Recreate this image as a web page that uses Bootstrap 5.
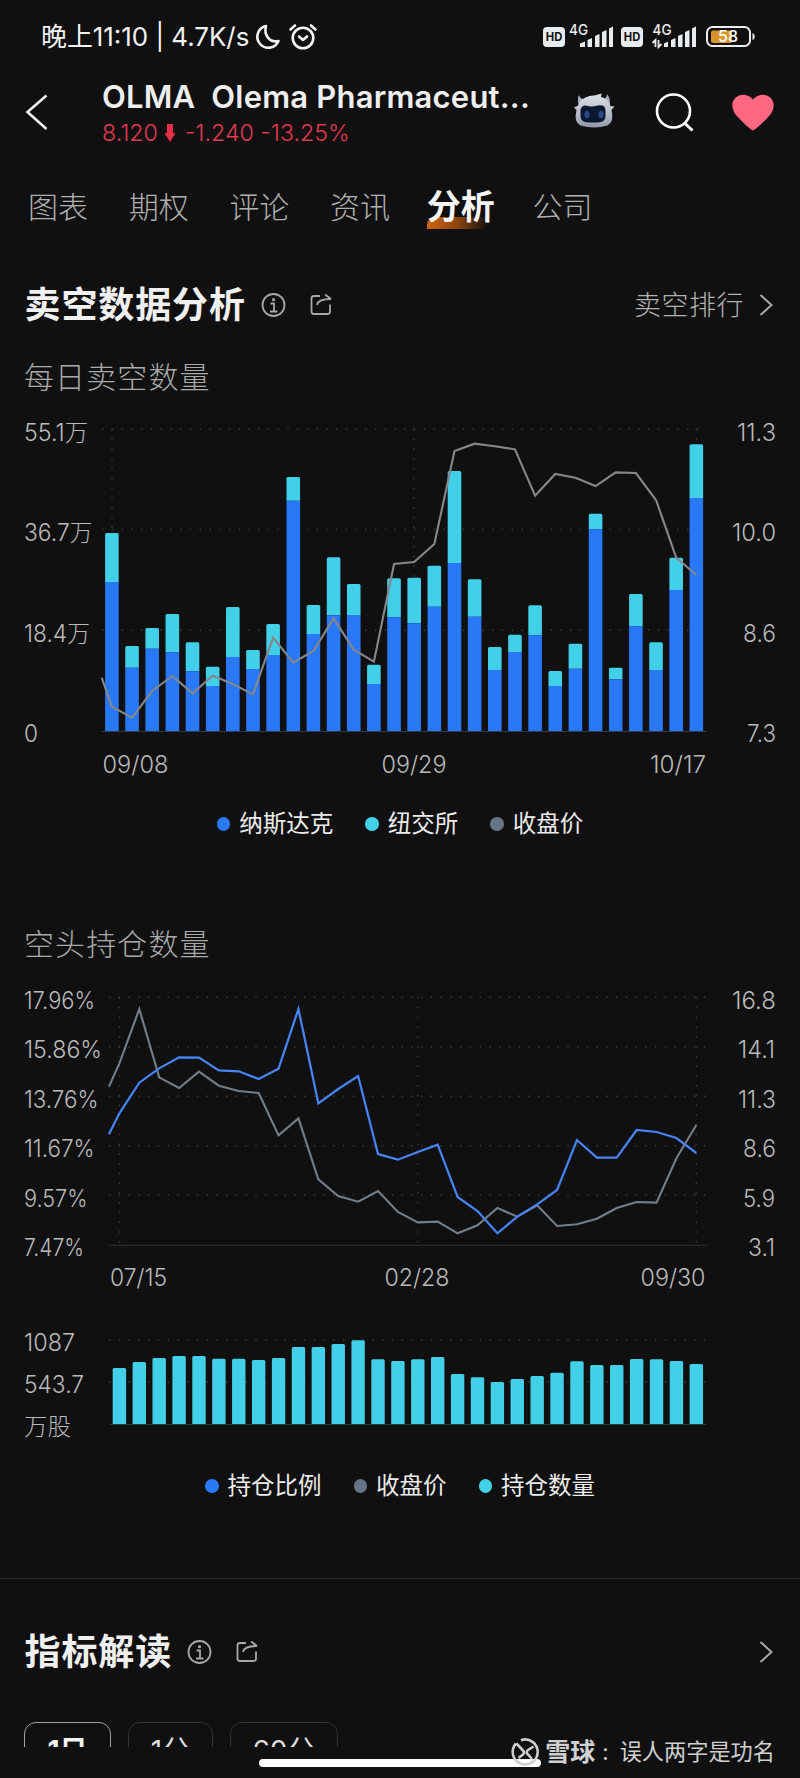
<!DOCTYPE html>
<html lang="zh-CN" data-bs-theme="dark">
<head>
<meta charset="utf-8">
<meta name="viewport" content="width=device-width, initial-scale=1">
<title>OLMA 分析</title>
<link href="https://cdn.jsdelivr.net/npm/bootstrap@5.3.0/dist/css/bootstrap.min.css" rel="stylesheet">
<style>
  body { background:#101010; color:#eee; font-family:Inter,"Noto Sans CJK SC",sans-serif; line-height:1; overflow:hidden; }
  .screen { width:800px; height:1778px; overflow:hidden; background:#101010; }
  .t { white-space:nowrap; display:inline-block; }
  .status-row { height:74px; padding-left:41px; color:#f2f2f2; }
  .status-text { font-size:25.9px; font-weight:400; line-height:34px; }
  .head-row { height:86px; }
  .stock-name { font-size:31px; font-weight:600; letter-spacing:.2px; color:#eee; line-height:36px; }
  .stock-price { font-size:23.2px; font-weight:300; color:#e03a50; line-height:36px; }
  .tabs-row { height:94px; margin-bottom:2px; padding-left:28px; gap:40.7px; font-size:30px; font-weight:300; color:#b0b0b0; }
  .tab-on { position:relative; font-size:34px; font-weight:700; color:#f5f5f5; margin-left:-4px; margin-right:-3px; }
  .tab-on::before { content:""; position:absolute; left:0; top:26.5px; width:62px; height:12px; border-radius:8px 0 8px 0; background:linear-gradient(90deg,#cf6410,#8a440f 50%,#101010); }
  .tab-on span { position:relative; }
  .title-row { height:98px; margin-bottom:2px; padding:0 27.5px 0 24.5px; }
  .title-text { font-size:36px; letter-spacing:.9px; font-weight:700; color:#f0f0f0; }
  .more-text { font-size:27px; letter-spacing:.5px; font-weight:300; color:#b2b2b2; }
  .sub-row { height:44px; padding-left:24px; font-size:30px; letter-spacing:1.1px; font-weight:300; color:#aaa; }
  .legend-row { height:68px; font-size:23.5px; color:#ececec; gap:32px; font-weight:400; }
  .key { gap:9px; }
  .dot { width:13.5px; height:13.5px; border-radius:50%; }
  .c-blue { background:#2878f8; } .c-cyan { background:#42d0e8; } .c-gray { background:#667488; }
  .spacer-a { height:64px; } .spacer-b { height:58px; }
  .rule { height:1px; background:#2b2d2b; }
  .indicator-row { height:141px; padding-top:5px; }
  .pills { height:25px; overflow:hidden; padding-left:24px; gap:17px; }
  .pill { height:54px; border:1.5px solid #333; border-radius:12px; font-size:28px; color:#ddd; flex:none; padding-top:14px; }
  .pill-on { border-color:#a0a0a0; font-weight:700; color:#f2f2f2; }
  .bottom { height:31px; position:relative; }
  .home { width:282px; height:8.5px; border-radius:5px; background:#fff; margin-left:258.5px; position:relative; top:11.5px; }
  .mark-line { position:absolute; right:25px; top:-13px; height:36px; gap:6px; color:#d0d0d0; font-size:22.2px; }
  .brand { font-size:25px; font-weight:600; }
  svg { display:block; flex:none; overflow:visible; }
  svg text { font-family:Inter,"Noto Sans CJK SC",sans-serif; }
  .axis { font-size:23.5px; font-weight:300; fill:#bababa; }
</style>
</head>
<body>
<div class="screen">
  <div class="status-row d-flex align-items-center">
    <span class="status-text t">晚上11:10 | 4.7K/s</span>
    <svg width="66" height="30" viewBox="252 22 66 30" fill="none" stroke="#f2f2f2" stroke-width="2.6" stroke-linecap="round" stroke-linejoin="round" class="ms-1">
      <path d="M265 26a11 11 0 1 0 12.5 15c-9 2-15-6-12.500-15z"/>
      <circle cx="302" cy="38" r="10.300"/><path d="M298 36.500l4 3.500 4-3.500M289.500 29.500l4.500-4M314.500 29.500l-4.500-4"/>
    </svg>
    <svg width="216" height="30" viewBox="540 22 216 30" class="ms-auto" style="margin-right:44px">
      <g fill="#e9ecee"><rect x="543" y="27" width="22" height="20" rx="4"/><rect x="621" y="27" width="22" height="20" rx="4"/>
      <path d="M580 47v-3.500l5-2V47zM587.500 47v-7l4.500-2v9zM595 47V36l4.500-2v13zM602 47V32l4.500-2v17zM609 47V28.500l4-2V47z"/>
      <path d="M664 47v-3.500l4-2V47zM671 47v-7l4.500-2v9zM678 47V36l4.500-2v13zM685 47V32l4.500-2v17zM692 47V28.500l4-2V47z"/></g>
      <path d="M655.500 47v-7l-3 3M658.500 40v7l3-3" fill="none" stroke="#e9ecee" stroke-width="1.800"/>
      <g font-size="12" font-weight="700" fill="#111"><text x="545.800" y="41.400" textLength="16.500" lengthAdjust="spacingAndGlyphs">HD</text><text x="623.800" y="41.400" textLength="16.500" lengthAdjust="spacingAndGlyphs">HD</text></g>
      <g font-size="15" font-weight="500" fill="#eee"><text x="569" y="35" textLength="19" lengthAdjust="spacingAndGlyphs">4G</text><text x="652.500" y="35" textLength="19" lengthAdjust="spacingAndGlyphs">4G</text></g>
      <rect x="707" y="27" width="43" height="19" rx="5.500" fill="none" stroke="#eee" stroke-width="2"/><rect x="711" y="30.500" width="21" height="12.500" rx="2" fill="#d9952b"/>
      <path d="M752.500 33v7c3-1 3-6 0-7" fill="#eee"/><text x="718" y="42" font-size="16" font-weight="500" fill="#fff" textLength="20">58</text>
    </svg>
  </div>

  <div class="head-row d-flex">
    <svg width="102" height="86" viewBox="0 74 102 86" fill="none" stroke="#eee" stroke-width="2.600"><path d="M46.500 95.500L27.500 112l19 17"/></svg>
    <div class="d-flex flex-column" style="padding-top:5px">
      <span class="stock-name t">OLMA&nbsp; Olema Pharmaceut...</span>
      <span class="stock-price t d-flex align-items-center"><span>8.120</span><svg width="12" height="18" viewBox="0 0 11 18" fill="#e6304a" style="margin:0 9px 0 6px"><path d="M2.500 0h6v9H11L5.500 18 0 9h2.500z"/></svg><span>-1.240 -13.25%</span></span>
    </div>
    <svg width="230" height="86" viewBox="570 74 230 86" class="ms-auto">
      <defs><linearGradient id="fur" x1="0" y1="0" x2="0" y2="1"><stop offset="0" stop-color="#dfe2ea"/><stop offset=".6" stop-color="#b5bac7"/><stop offset="1" stop-color="#8e98ae"/></linearGradient></defs>
      <path d="M578.500 104q-1.500-5 .5-9 1 3.500 5 4.500l-1 5zM605 98q2-1 2-4 4 5 2.500 11l-5 1z" fill="#a4aaba"/>
      <path d="M574 107.500l3.500-1.500q3-8 12-10 6-.5 12-2.500l-.5 3.500q8 2 9.500 9l4 .5-3 3.500q3 12-4 15.500-13 4-27 0-7-3-4-15.500z" fill="url(#fur)"/>
      <path d="M580.500 110q1-4.500 5-4.500 6 2 12 0 8-1.500 8 5v5q0 7-8 7h-9q-8 0-8-7z" fill="#0c1730"/>
      <g fill="#264a85"><ellipse cx="587" cy="114.500" rx="2.600" ry="3.800"/><ellipse cx="601" cy="114.500" rx="2.600" ry="3.800"/></g>
      <g fill="none" stroke="#fff" stroke-width="2.600"><circle cx="673.500" cy="111" r="16.500"/><path d="M684.500 123l8 7.500" stroke-width="3"/></g>
      <path d="M753 130.500Q749 129 735.500 114.500C725 99 743 88 753 99.500 763 88 781 99 770.500 114.500 757 129 753 130.500 753 130.500z" fill="#ff6880"/>
    </svg>
  </div>

  <div class="tabs-row d-flex align-items-center">
    <span>图表</span><span>期权</span><span>评论</span><span>资讯</span><span class="tab-on"><span>分析</span></span><span>公司</span>
  </div>

  <div class="title-row d-flex align-items-center">
    <span class="title-text t">卖空数据分析</span>
    <svg width="72" height="26" viewBox="261 292 72 26" fill="none" stroke="#a8a8a8" stroke-width="1.800" style="margin-left:15.500px">
      <g id="tools"><circle cx="273.500" cy="305" r="11"/><path d="M270.500 303.500h3.500v8M270 311.500h7.500"/><circle cx="273.500" cy="299.700" r=".7"/>
      <path d="M320 296h-6q-2.500 0-2.500 2.500v13q0 2.500 2.500 2.500h13.500q2.500 0 2.500-2.500V304.500M317 305q1-6 14-6M325 294.500l6 4.500"/></g>
    </svg>
    <span class="more-text t ms-auto">卖空排行</span>
    <svg width="14" height="22" viewBox="0 0 14 22" fill="none" stroke="#a8a8a8" stroke-width="2" style="margin-left:14.500px"><path d="M1.500 1l11 10-11 10"/></svg>
  </div>
  <div class="sub-row d-flex align-items-center" style="height:42px;margin-bottom:2px">每日卖空数量</div>
  <svg id="chartShort" width="800" height="390" viewBox="0 400 800 390"></svg>
  <div class="legend-row d-flex align-items-center justify-content-center">
    <span class="key d-flex align-items-center"><i class="dot c-blue"></i>纳斯达克</span><span class="key d-flex align-items-center"><i class="dot c-cyan"></i>纽交所</span><span class="key d-flex align-items-center"><i class="dot c-gray"></i>收盘价</span>
  </div>
  <div class="spacer-a"></div>
  <div class="sub-row d-flex align-items-center">空头持仓数量</div>
  <svg id="chartPos" width="800" height="486" viewBox="0 966 800 486"></svg>
  <div class="legend-row d-flex align-items-center justify-content-center">
    <span class="key d-flex align-items-center"><i class="dot c-blue"></i>持仓比例</span><span class="key d-flex align-items-center"><i class="dot c-gray"></i>收盘价</span><span class="key d-flex align-items-center"><i class="dot c-cyan"></i>持仓数量</span>
  </div>
  <div class="spacer-b"></div>
  <div class="rule"></div>
  <div class="title-row indicator-row d-flex align-items-center">
    <span class="title-text t">指标解读</span>
    <svg width="72" height="26" viewBox="261 292 72 26" fill="none" stroke="#a8a8a8" stroke-width="1.800" style="margin-left:15px"><use href="#tools"/></svg>
    <svg width="14" height="22" viewBox="0 0 14 22" fill="none" stroke="#a8a8a8" stroke-width="2" class="ms-auto"><path d="M1.500 1l11 10-11 10"/></svg>
  </div>
  <div class="pills d-flex">
    <div class="pill pill-on text-center" style="width:87px">1日</div>
    <div class="pill text-center" style="width:85px">1分</div>
    <div class="pill text-center" style="width:108px">60分</div>
  </div>
  <div class="bottom">
    <div class="home"></div>
    <div class="mark-line d-flex align-items-center">
      <svg width="28" height="28" viewBox="0 0 28 28" fill="none" stroke="#cfcfcf" stroke-width="2.600"><path d="M10 2.200A12.500 12.500 0 1 1 5 5.500M5.500 5.500L12 12.500q2 2 0 4L7.500 20M22.500 8.500L17 12q-2.500 2 0 4.500L21 21"/></svg>
      <span class="t d-flex align-items-center"><span class="brand">雪球</span><span style="margin:0 11px 0 7px">:</span><span>误人两字是功名</span></span>
    </div>
  </div>
</div>
<script src="https://cdn.jsdelivr.net/npm/bootstrap@5.3.0/dist/js/bootstrap.bundle.min.js"></script>
<script>
// Labels: [text, x, baseline, width, anchored at its end]
const label = ([s, x, y, w, end]) =>
  `<text class="axis" x="${end ? x - w : x}" y="${y}" textLength="${w}" lengthAdjust="spacingAndGlyphs">${s}</text>`;
const dots = (x1, y1, x2, y2) =>
  `<line x1="${x1}" y1="${y1}" x2="${x2}" y2="${y2}" stroke="#3a3a3a" stroke-width="1.5" stroke-dasharray="1.5 8.25"/>`;
const bar = (cx, top, base, w, color, r) =>
  `<path d="M${cx - w / 2} ${base}V${top + r}q0 ${-r} ${r} ${-r}h${w - 2 * r}q${r} 0 ${r} ${r}V${base}z" fill="${color}"/>`;
const line = (xs, ys, color, w) =>
  `<polyline fill="none" stroke="${color}" stroke-width="${w}" points="${xs.map((x, i) => x + ',' + ys[i]).join(' ')}"/>`;

// Daily short volume: total and Nasdaq share, in thirds of a pixel below y=410
const total = [369,708,654,612,697,770,591,720,642,201,585,442,522,764,505,503,467,183,508,711,674,586,783,701,311,773,552,697,443,103];
const nasdaq = [516,773,716,727,784,828,741,777,735,272,672,616,615,822,622,640,590,459,620,780,726,676,828,776,358,808,649,780,540,264];
const close1 = [803,890,923,843,798,850,797,822,853,683,758,723,625,719,755,462,456,402,123,101,109,118,257,192,203,228,187,189,270,443,495];
let g = [429, 529.6, 630.3].map(y => dots(102, y, 707, y)).join('');
g += [112, 413.8, 696.3].map(x => dots(x, 429, x, 731)).join('');
total.forEach((t, i) => {
  const x = 111.9 + i * 20.153, split = 410 + nasdaq[i] / 3;
  g += bar(x, 410 + t / 3, split, 13.6, '#42d0e8', 1.5) + bar(x, split, 731.3, 13.6, '#2878f8', 0);
});
g += '<path d="M102 731.500H707" stroke="#303a48"/>';
g += line([101.7, ...total.map((_, i) => 111.9 + i * 20.153)], close1.map(v => 410 + v / 3), '#85878c', 2.1);
g += [['55.1万',24,440.7,64],['36.7万',24,541.3,68.5],['18.4万',24,642,66],['0',24,742.3,14],
  ['11.3',776,440.7,39,1],['10.0',776,541.3,44,1],['8.6',776,642,33,1],['7.3',776,742.3,29,1],
  ['09/08',102.5,772.5,66],['09/29',381.5,772.5,65],['10/17',706,772.5,56,1]].map(label).join('');
chartShort.innerHTML = g;

// Short interest ratio, close and share count
const ratio = [493,430,338,295,262,263,301,304,327,296,117,400,357,318,552,569,546,524,681,723,790,740,703,660,510,563,563,480,486,504,549];
const close2 = [350,280,117,322,354,305,347,363,369,496,445,628,678,695,663,726,757,755,790,766,714,740,706,768,763,746,714,696,698,565,465];
const shares = [174,156,144,138,138,146,146,150,144,111,111,102,91,148,153,148,141,192,202,216,207,198,188,154,165,165,147,148,153,162];
const xs = shares.map((_, i) => 119.4 + i * 19.894);
g = [997.3,1047,1096.3,1145.7,1195,1339.7,1382].map(y => dots(109, y, 707, y)).join('');
g += [119.4,417.7,696.3].map(x => dots(x, 997.3, x, 1245)).join('');
g += '<path d="M109 1245.300H707" stroke="#333"/>';
g += line([108.9, ...xs], close2.map(v => 970 + v / 3), '#747e88', 2.1);
g += line([108.9, ...xs], ratio.map(v => 970 + v / 3), '#4785f7', 2.2);
shares.forEach((t, i) => g += bar(xs[i], 1310 + t / 3, 1424.3, 13.4, '#42d0e8', 1.5));
g += '<path d="M109 1424.500H707" stroke="#26383c"/>';
g += [['17.96%',24,1008.7,71],['15.86%',24,1058,78],['13.76%',24,1107.5,74.5],['11.67%',24,1157,70.5],['9.57%',24,1206.5,63.5],['7.47%',24,1256,60],
  ['16.8',776,1008.7,44,1],['14.1',775,1058,37,1],['11.3',776,1107.5,38,1],['8.6',776,1157,33,1],['5.9',775,1206.5,32,1],['3.1',775,1256,27,1],
  ['07/15',110,1286,57],['02/28',384.5,1286,65],['09/30',705.5,1286,65,1],
  ['1087',24,1350.5,51],['543.7',24,1392.7,60],['万股',24,1435,47]].map(label).join('');
chartPos.innerHTML = g;
</script>
</body>
</html>
